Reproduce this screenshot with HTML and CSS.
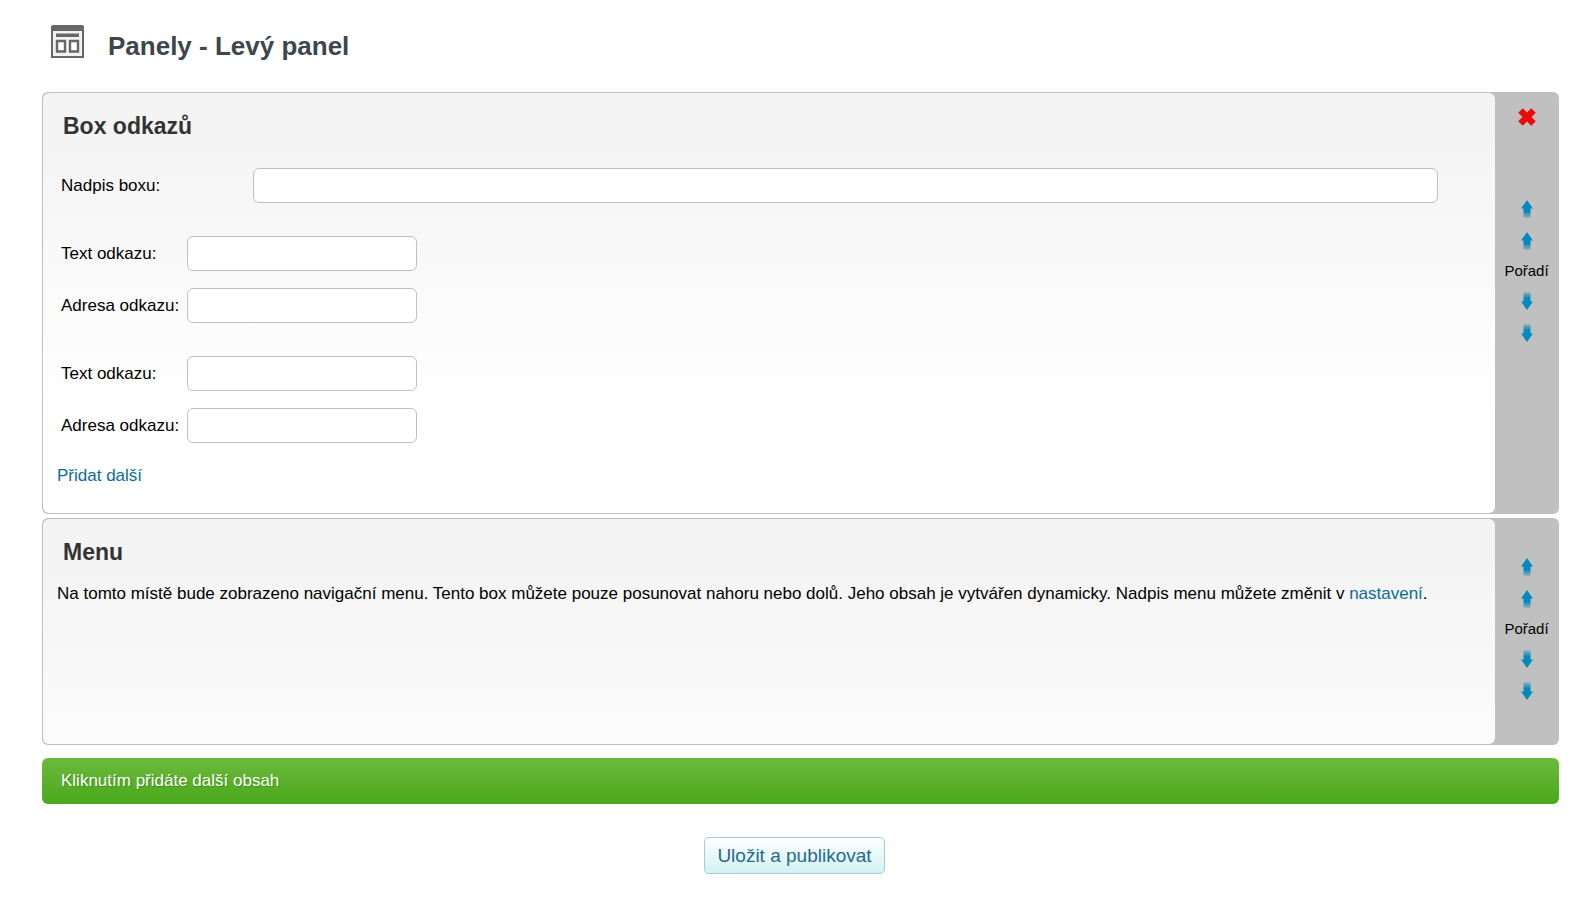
FILE: index.html
```html
<!DOCTYPE html>
<html lang="cs">
  <head>
    <meta charset="UTF-8" />
    <meta name="viewport" content="width=device-width, initial-scale=1.0" />
    <title>Panely - Levý panel</title>
    <link rel="stylesheet" href="styles.css">
  </head>
  <body>
    <!-- shared icons -->
    <svg class="sprite" aria-hidden="true">
      <defs>
        <linearGradient id="fade-down" x1="0" y1="0" x2="0" y2="1">
          <stop offset="0.65" stop-color="#0488bd" />
          <stop offset="1" stop-color="#0488bd" stop-opacity="0.2" />
        </linearGradient>
      </defs>
      <symbol id="arrow" viewBox="0 0 14 20">
        <path d="M7 1L13 9.5H10.500V19H3.500V9.500H1Z" fill="url(#fade-down)" />
      </symbol>
    </svg>

    <header class="page-header">
      <svg class="page-icon" viewBox="0 0 33 33" aria-hidden="true">
        <path d="M2 0H31Q33 0 33 2V33H0V2Q0 0 2 0Z" fill="#676767" />
        <path d="M2 6H31V31H2Z" fill="#f2f2f2" />
        <path d="M5 8.500H28V12H5Z" fill="#676767" />
        <path d="M6 16H14V26.500H6ZM19 16H27V26.500H19Z" fill="#fff" stroke="#676767" stroke-width="2.400" />
      </svg>
      <h1>Panely - Levý panel</h1>
    </header>

    <main>
      <form>
        <section class="box">
          <div class="box-content">
            <h2>Box odkazů</h2>
            <div class="row row-title">
              <label for="box-title">Nadpis boxu:</label>
              <input type="text" id="box-title" />
            </div>
            <div class="link-group">
              <div class="row">
                <label for="link-text-1">Text odkazu:</label>
                <input type="text" id="link-text-1" />
              </div>
              <div class="row">
                <label for="link-url-1">Adresa odkazu:</label>
                <input type="text" id="link-url-1" />
              </div>
            </div>
            <div class="link-group">
              <div class="row">
                <label for="link-text-2">Text odkazu:</label>
                <input type="text" id="link-text-2" />
              </div>
              <div class="row">
                <label for="link-url-2">Adresa odkazu:</label>
                <input type="text" id="link-url-2" />
              </div>
            </div>
            <a class="add-link" href="#">Přidat další</a>
          </div>
          <div class="box-side box-side-top">
            <button type="button" class="icon-button delete" aria-label="Smazat">
              <svg width="20" height="20" viewBox="0 0 20 20" aria-hidden="true">
                <path d="M3.500 3.500L16.500 16.500M16.500 3.500L3.500 16.500" stroke="#ea0b0b" stroke-width="6.500" />
              </svg>
            </button>
            <button type="button" class="icon-button" aria-label="Na začátek"><svg class="arrow"><use href="#arrow" /></svg></button>
            <button type="button" class="icon-button" aria-label="Nahoru"><svg class="arrow"><use href="#arrow" /></svg></button>
            <span>Pořadí</span>
            <button type="button" class="icon-button" aria-label="Dolů"><svg class="arrow down"><use href="#arrow" /></svg></button>
            <button type="button" class="icon-button" aria-label="Na konec"><svg class="arrow down"><use href="#arrow" /></svg></button>
          </div>
        </section>

        <section class="box">
          <div class="box-content">
            <h2>Menu</h2>
            <p>Na tomto místě bude zobrazeno navigační menu. Tento box můžete pouze posunovat nahoru nebo dolů. Jeho obsah je vytvářen dynamicky. Nadpis menu můžete změnit v <a href="#">nastavení</a>.</p>
          </div>
          <div class="box-side">
            <button type="button" class="icon-button" aria-label="Na začátek"><svg class="arrow"><use href="#arrow" /></svg></button>
            <button type="button" class="icon-button" aria-label="Nahoru"><svg class="arrow"><use href="#arrow" /></svg></button>
            <span>Pořadí</span>
            <button type="button" class="icon-button" aria-label="Dolů"><svg class="arrow down"><use href="#arrow" /></svg></button>
            <button type="button" class="icon-button" aria-label="Na konec"><svg class="arrow down"><use href="#arrow" /></svg></button>
          </div>
        </section>

        <button type="button" class="add-content">Kliknutím přidáte další obsah</button>

        <div class="actions">
          <button type="submit" class="save">Uložit a publikovat</button>
        </div>
      </form>
    </main>
  </body>
</html>
```

FILE: styles.css
```css
* {
  margin: 0;
  padding: 0;
  box-sizing: border-box;
}

body {
  padding: 24px 16px 24px 42px;
  background-color: #fff;
  color: #000;
  font-family: "Liberation Sans", Arial, sans-serif;
  font-size: 17px;
  line-height: 22px;
}

button,
input {
  font: inherit;
}

button {
  cursor: pointer;
}

a {
  color: #0b6d98;
  text-decoration: none;
}

a:hover {
  text-decoration: underline;
}

.sprite {
  position: absolute;
  width: 0;
  height: 0;
}

.page-header {
  display: flex;
  gap: 24px;
  padding-left: 9px;
  margin-bottom: 30px;
}

.page-icon {
  width: 33px;
  height: 33px;
  margin-top: 1px;
}

h1 {
  padding-top: 6px;
  font-size: 26px;
  line-height: 32px;
  color: #3d464d;
}

h2 {
  padding-left: 6px;
  font-size: 23px;
  line-height: 28px;
  color: #333;
}

.box {
  display: flex;
  padding: 1px;
  margin-bottom: 4px;
  border-radius: 6px;
  background-color: #c0c0c0;
}

.box-content {
  flex: 1;
  padding: 19px 14px 26px;
  border-radius: 6px;
  background: linear-gradient(#f4f4f4 40px, #fff 320px);
}

.box-content p {
  margin-top: 17px;
}

.row {
  display: flex;
  align-items: center;
  padding-left: 4px;
}

.row label {
  width: 126px;
}

.row input {
  width: 230px;
  height: 35px;
  padding-inline: 8px;
  border: 1px solid #c0c0c0;
  border-radius: 6px;
  background-color: #fff;
}

.row-title {
  margin-top: 28px;
  padding-right: 43px;
}

.row-title label {
  width: 192px;
}

.row-title input {
  flex: 1;
}

.link-group {
  display: grid;
  gap: 17px;
  margin-top: 33px;
}

.add-link {
  display: inline-block;
  margin-top: 22px;
}

.box-side {
  width: 63px;
  padding: 32px 0 37px;
  display: flex;
  flex-direction: column;
  align-items: center;
  font-size: 15px;
  line-height: 28px;
}

.box-side-top {
  padding-top: 8px;
}

.icon-button {
  width: 32px;
  height: 32px;
  display: grid;
  place-content: center;
  border: 0;
  background-color: transparent;
}

.delete {
  margin-bottom: 60px;
}

.arrow {
  width: 14px;
  height: 20px;
}

.down {
  transform: rotate(180deg);
}

.add-content {
  display: block;
  width: 100%;
  height: 46px;
  margin-top: 13px;
  padding-inline: 19px;
  border: 0;
  border-radius: 6px;
  background: linear-gradient(#6cba3d, #49a81a);
  color: #fff;
  text-align: left;
  text-shadow: 1px 1px 1px #3c8a18;
}

.actions {
  display: flex;
  justify-content: center;
  margin-top: 33px;
  padding-right: 12px;
}

.save {
  height: 37px;
  padding-inline: 12px;
  border: 1px solid #a3cdd5;
  border-radius: 5px;
  background: linear-gradient(#fff, #d3f1f3);
  color: #256b8d;
  font-size: 19px;
}
```
